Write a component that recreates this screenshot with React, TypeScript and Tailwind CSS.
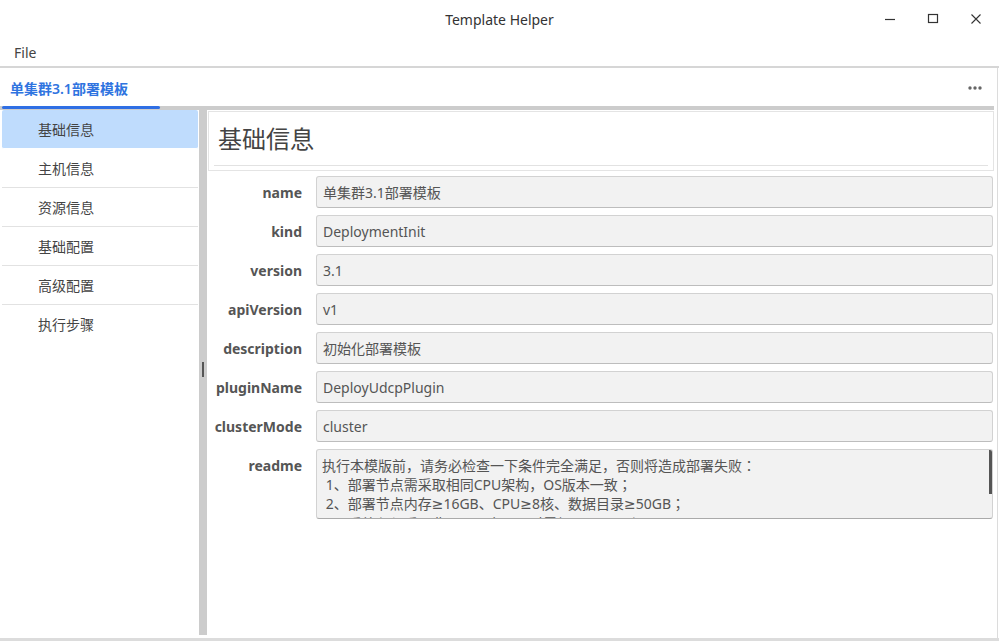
import { useState } from 'react';

const fields = [
  { label: 'name', value: '单集群3.1部署模板' },
  { label: 'kind', value: 'DeploymentInit' },
  { label: 'version', value: '3.1' },
  { label: 'apiVersion', value: 'v1' },
  { label: 'description', value: '初始化部署模板' },
  { label: 'pluginName', value: 'DeployUdcpPlugin' },
  { label: 'clusterMode', value: 'cluster' },
];

const navItems = ['基础信息', '主机信息', '资源信息', '基础配置', '高级配置', '执行步骤'];

// "≥" is not in Noto Sans, so give it a latin font instead of the CJK fallback
const Ge = () => <span style={{ fontFamily: '"DejaVu Sans", sans-serif' }}>≥</span>;

export default function App() {
  const [active, setActive] = useState(0);

  return (
    <div
      className="w-[999px] h-[641px] bg-white flex flex-col overflow-hidden text-[#333]"
      style={{ fontFamily: '"Noto Sans", "Noto Sans CJK JP", sans-serif' }}
    >
      {/* title bar */}
      <div className="h-[38px] shrink-0 flex items-center relative">
        <div className="flex-1 text-center text-[14px] text-[#333]">Template Helper</div>
        <div className="absolute right-0 top-0 h-[38px] flex items-center">
          <button className="w-[43px] h-[38px] flex items-center justify-center">
            <svg width="12" height="12" viewBox="0 0 12 12">
              <path d="M1 6.5h10" stroke="#333" strokeWidth="1.2" />
            </svg>
          </button>
          <button className="w-[43px] h-[38px] flex items-center justify-center">
            <svg width="12" height="12" viewBox="0 0 12 12">
              <rect x="1.5" y="1.5" width="9" height="8" fill="none" stroke="#333" strokeWidth="1.2" />
            </svg>
          </button>
          <button className="w-[43px] h-[38px] flex items-center justify-center mr-[2px]">
            <svg width="12" height="12" viewBox="0 0 12 12">
              <path d="M1.5 1.5l9 9M10.5 1.5l-9 9" stroke="#333" strokeWidth="1.1" />
            </svg>
          </button>
        </div>
      </div>

      {/* menu bar */}
      <div className="h-[30px] shrink-0 flex items-center px-[14px] text-[14px] text-[#444] border-b-2 border-[#d6d6d6]">
        File
      </div>

      <div className="flex-1 flex flex-col border-r border-[#dcdcdc] mr-[1px] min-h-0">
        {/* tab bar */}
        <div className="h-[38px] shrink-0 flex items-end justify-between pr-[15px]">
          <div className="pl-[10px] pb-[7px] text-[14px] font-semibold text-[#2f74e0]">单集群3.1部署模板</div>
          <svg width="14" height="4" viewBox="0 0 14 4" className="mb-[16px]">
            <circle cx="2" cy="2" r="1.7" fill="#666" />
            <circle cx="7" cy="2" r="1.7" fill="#666" />
            <circle cx="12" cy="2" r="1.7" fill="#666" />
          </svg>
        </div>
        <div className="h-[4px] shrink-0 bg-[#cccccc] mr-[3px] relative">
          <div className="absolute left-[2px] top-0 w-[158px] h-[3px] rounded-full bg-[#2f6fe4]" />
        </div>

        <div className="flex-1 flex min-h-0 pb-[3px]">
          {/* sidebar */}
          <div className="w-[199px] shrink-0 pl-[2px] pr-[1px]">
            {navItems.map((item, i) => (
              <div
                key={item}
                onClick={() => setActive(i)}
                className={`h-[39px] flex items-center pl-[36px] text-[14px] text-[#444] cursor-pointer ${
                  i < navItems.length - 1 ? 'border-b border-[#e2e2e2]' : ''
                } ${active === i ? 'bg-[#bfdcfd] rounded-[2px] border-b-white' : ''}`}
              >
                {item}
              </div>
            ))}
          </div>

          {/* splitter */}
          <div className="w-[8px] shrink-0 bg-[#cccccc] flex items-center justify-center">
            <div className="w-[2px] h-[15px] bg-[#555] mt-[-6px]" />
          </div>

          {/* content */}
          <div className="flex-1 min-w-0 pl-[1px] pr-[3px] pt-[1px]">
            <div className="h-[60px] border border-[#e4e4e4] px-[5px] flex flex-col">
              <div className="flex-1 flex items-center pl-[4px] pt-[1px] text-[24px] text-[#444]">基础信息</div>
              <div className="h-px bg-[#e2e2e2] mb-[4px]" />
            </div>

            <div className="pt-[5px] pr-[1px] flex flex-col gap-[7px]">
              {fields.map((f) => (
                <div key={f.label} className="flex items-center">
                  <div className="w-[94px] shrink-0 text-right text-[14px] font-bold text-[#555]">{f.label}</div>
                  <div className="ml-[14px] flex-1 h-[32px] bg-[#f2f2f2] border border-[#d2d2d2] border-b-[#bdbdbd] rounded-[3px] flex items-center px-[6px] text-[14px] text-[#555]">
                    {f.value}
                  </div>
                </div>
              ))}
              <div className="flex items-start">
                <div className="w-[94px] shrink-0 text-right text-[14px] font-bold text-[#555] pt-[6px]">readme</div>
                <div className="ml-[14px] flex-1 h-[70px] bg-[#f2f2f2] border border-[#d2d2d2] border-b-[#aaaaaa] rounded-[3px] relative overflow-hidden">
                  <div className="px-[5px] pt-[6px] text-[14px] leading-[19px] text-[#555] whitespace-pre">
                    <div>执行本模版前，请务必检查一下条件完全满足，否则将造成部署失败：</div>
                    <div> 1、部署节点需采取相同CPU架构，OS版本一致；</div>
                    <div>
                      {' 2、部署节点内存'}
                      <Ge />
                      {'16GB、CPU'}
                      <Ge />
                      {'8核、数据目录'}
                      <Ge />
                      {'50GB；'}
                    </div>
                    <div> 3、系统必须采用非root用户，同时需加入docker组；</div>
                  </div>
                  <div className="absolute right-0 top-0 w-[3px] h-[44px] bg-[#555]" />
                </div>
              </div>
            </div>
          </div>
        </div>
      </div>
      <div className="h-[3px] shrink-0 bg-[#dcdcdc]" />
    </div>
  );
}
